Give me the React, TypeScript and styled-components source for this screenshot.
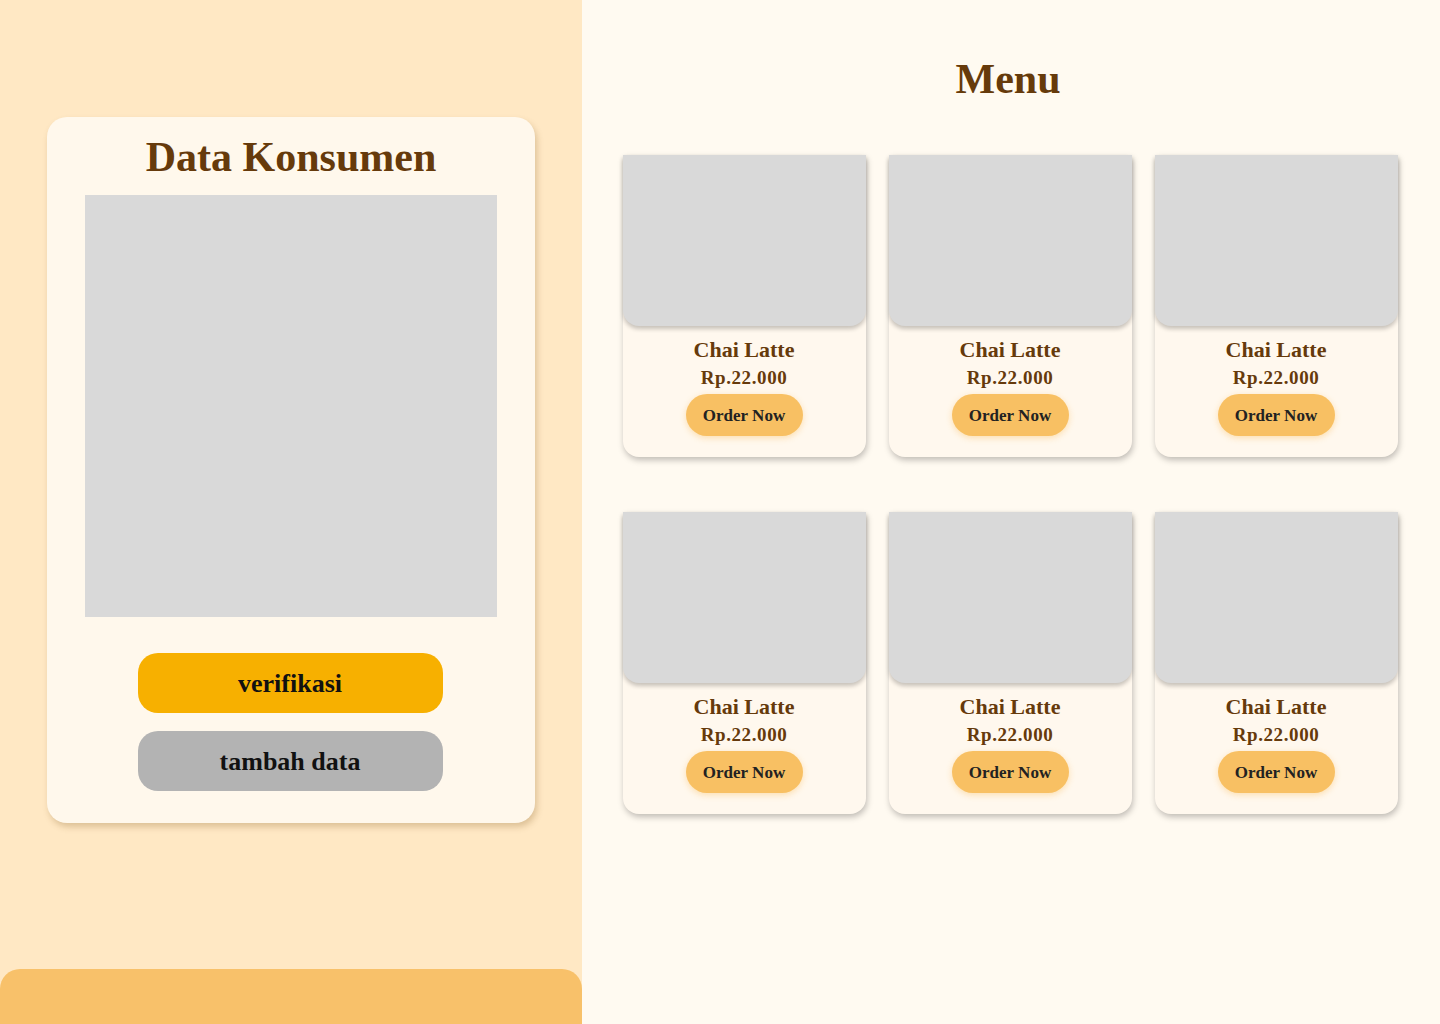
import React from "react";
import styled, { createGlobalStyle } from "styled-components";

const GlobalStyle = createGlobalStyle`
  * {
    box-sizing: border-box;
    margin: 0;
    padding: 0;
  }
  body {
    font-family: "Liberation Serif", "DejaVu Serif", serif;
    background: #fffaf1;
  }
`;

const Page = styled.div`
  display: flex;
  width: 1440px;
  height: 1024px;
  overflow: hidden;
`;

const Side = styled.aside`
  width: 582px;
  height: 100%;
  background: #ffe8c4;
  display: flex;
  flex-direction: column;
  align-items: center;
  padding-top: 117px;
`;

const CustomerCard = styled.section`
  width: 488px;
  height: 706px;
  background: #fff8ec;
  border-radius: 20px;
  box-shadow: 2px 4px 6px rgba(120, 80, 20, 0.25);
  display: flex;
  flex-direction: column;
  align-items: center;
  padding-top: 16px;
`;

const CardTitle = styled.h1`
  font-size: 42px;
  font-weight: 700;
  color: #663a0b;
  line-height: 48px;
  margin-bottom: 14px;
`;

const Preview = styled.div`
  width: 412px;
  height: 422px;
  background: #d9d9d9;
  margin-bottom: 36px;
`;

const ActionButton = styled.button<{ $variant: "primary" | "muted" }>`
  width: 305px;
  height: 60px;
  border: none;
  border-radius: 20px;
  background: ${(p) => (p.$variant === "primary" ? "#f7b000" : "#b3b3b3")};
  font-family: inherit;
  font-size: 26px;
  font-weight: 700;
  color: #111;
  margin-bottom: 18px;
  margin-right: 2px;
  padding-top: 2px;
`;

const Spacer = styled.div`
  flex: 1;
`;

const BottomBar = styled.div`
  width: 100%;
  height: 55px;
  background: #f8c16a;
  border-radius: 20px 20px 0 0;
`;

const Main = styled.main`
  flex: 1;
  display: flex;
  flex-direction: column;
  align-items: center;
  padding-top: 54px;
  background: #fffaf1;
`;

const MenuTitle = styled.h2`
  font-size: 42px;
  font-weight: 700;
  color: #663a0b;
  line-height: 50px;
  margin-bottom: 51px;
  margin-right: 6px;
`;

const Grid = styled.div`
  display: grid;
  grid-template-columns: repeat(3, 243px);
  column-gap: 23px;
  row-gap: 55px;
  margin-right: 2px;
`;

const ItemCard = styled.div`
  width: 243px;
  height: 302px;
  background: #fff8ee;
  border-radius: 4px 4px 16px 16px;
  box-shadow: 1px 3px 6px rgba(0, 0, 0, 0.25);
  display: flex;
  flex-direction: column;
  align-items: center;
`;

const ItemImage = styled.div`
  width: 100%;
  height: 171px;
  background: #d9d9d9;
  border-radius: 0 0 16px 16px;
  box-shadow: 0 3px 4px rgba(0, 0, 0, 0.22);
  margin-bottom: 10px;
`;

const ItemName = styled.div`
  font-size: 22px;
  font-weight: 700;
  color: #663a0b;
  line-height: 28px;
`;

const ItemPrice = styled.div`
  font-size: 19px;
  font-weight: 700;
  letter-spacing: 0.6px;
  color: #663a0b;
  line-height: 24px;
  margin-top: 2px;
  margin-bottom: 4px;
`;

const OrderButton = styled.button`
  width: 117px;
  height: 42px;
  border: none;
  border-radius: 21px;
  background: #f8c063;
  box-shadow: 0 2px 6px rgba(248, 192, 99, 0.45);
  font-family: inherit;
  font-size: 17px;
  font-weight: 700;
  color: #222;
  padding-top: 2px;
`;

const items = Array.from({ length: 6 }, () => ({
  name: "Chai Latte",
  price: "Rp.22.000",
}));

export default function App() {
  return (
    <>
      <GlobalStyle />
      <Page>
        <Side>
          <CustomerCard>
            <CardTitle>Data Konsumen</CardTitle>
            <Preview />
            <ActionButton $variant="primary">verifikasi</ActionButton>
            <ActionButton $variant="muted">tambah data</ActionButton>
          </CustomerCard>
          <Spacer />
          <BottomBar />
        </Side>
        <Main>
          <MenuTitle>Menu</MenuTitle>
          <Grid>
            {items.map((item, i) => (
              <ItemCard key={i}>
                <ItemImage />
                <ItemName>{item.name}</ItemName>
                <ItemPrice>{item.price}</ItemPrice>
                <OrderButton>Order Now</OrderButton>
              </ItemCard>
            ))}
          </Grid>
        </Main>
      </Page>
    </>
  );
}
